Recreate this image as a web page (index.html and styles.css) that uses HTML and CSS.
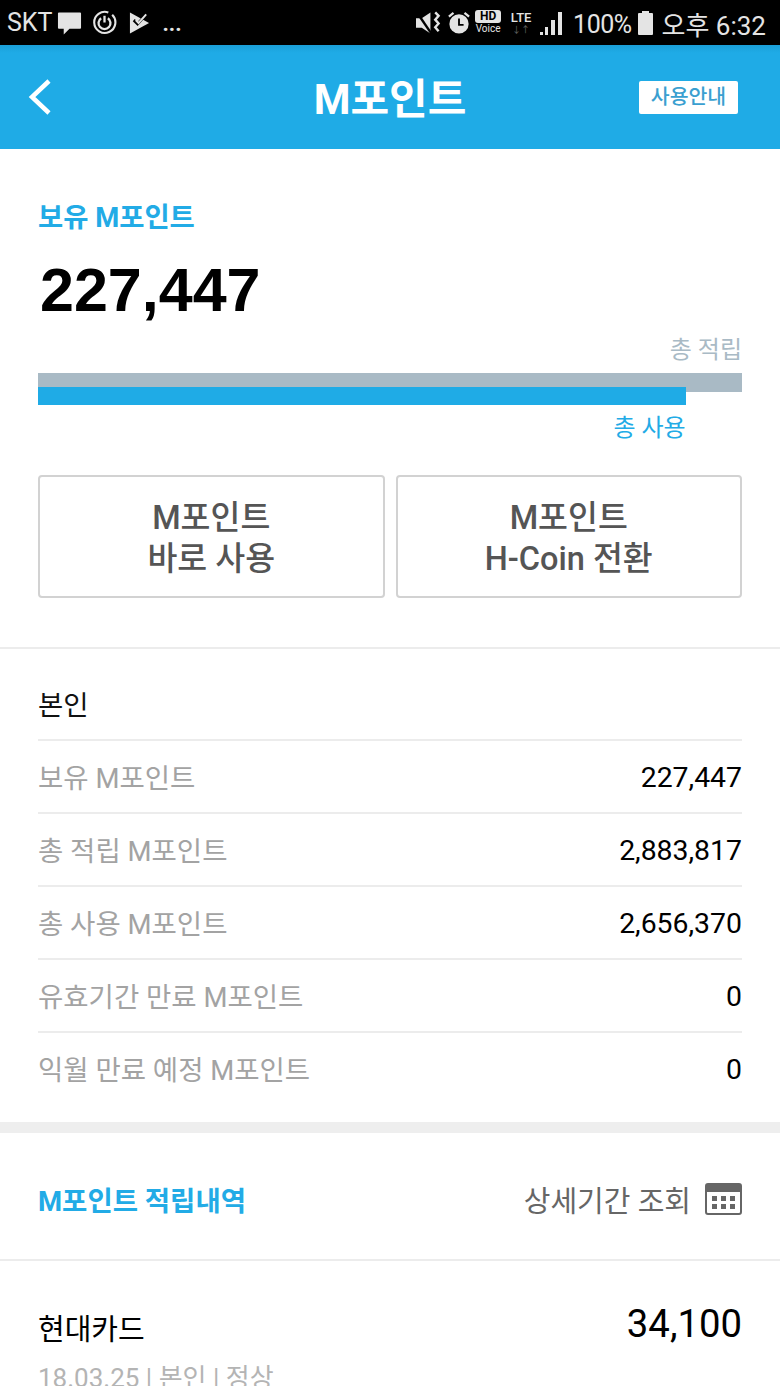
FILE: index.html
```html
<!DOCTYPE html>
<html lang="ko">
<head>
  <meta charset="UTF-8" />
  <meta name="viewport" content="width=device-width, initial-scale=1.0" />
  <title>M포인트</title>
  <link rel="stylesheet" href="styles.css">
</head>
<body>
  <div class="status-bar">
    <div class="status-left">
      <span class="carrier">SKT</span>
      <svg class="status-icon" width="25" height="24" viewBox="0 0 26 24"><path d="M2 1h22a1 1 0 0 1 1 1v15a1 1 0 0 1-1 1H13l-6 6v-6H2a1 1 0 0 1-1-1V2a1 1 0 0 1 1-1z" fill="#e4e4e4"/></svg>
      <svg class="status-icon" width="25" height="25" viewBox="0 0 26 26" fill="none" stroke="#e4e4e4"><path d="M21 5a11 11 0 1 1-4-2.500" stroke-width="2.200"/><path d="M9.500 8.500a6.200 6.200 0 1 0 7 0" stroke-width="2.400"/><path d="M13 6v7" stroke-width="2.400"/></svg>
      <svg class="status-icon" width="21" height="24" viewBox="0 0 22 24"><path d="M1 1l20 11L1 23z" fill="#e4e4e4"/><path d="M5 9l4 4 9-10" fill="none" stroke="#000" stroke-width="3"/><path d="M7 9l3 3 8-9" fill="none" stroke="#e4e4e4" stroke-width="2"/></svg>
      <span class="more">...</span>
    </div>
    <div class="status-right">
      <svg class="status-icon mute" width="25" height="26" viewBox="0 0 26 26"><path d="M0 8h6l9-6v22l-9-6H0z" fill="#e4e4e4"/><path d="M1 2l15 22" stroke="#000" stroke-width="2.500"/><path d="M20 2l3.500 3.500-3.500 4 3.500 4-3.500 4 3.500 4" fill="none" stroke="#e4e4e4" stroke-width="2.500"/></svg>
      <svg class="status-icon alarm" width="22" height="26" viewBox="0 0 24 26"><circle cx="12" cy="14" r="10.500" fill="#e4e4e4"/><path d="M12 8v7h5" fill="none" stroke="#000" stroke-width="2"/><path d="M1 6l5-4M23 6l-5-4" stroke="#e4e4e4" stroke-width="2.500"/></svg>
      <div class="hd-voice"><span class="hd">HD</span><span class="voice">Voice</span></div>
      <div class="lte"><span class="lte-text">LTE</span><span class="lte-arrows">↓↑</span></div>
      <svg class="status-icon signal" width="24" height="24" viewBox="0 0 22 24" fill="#e4e4e4"><path d="M0 21h3v3H0zM5 16h3v8H5zM11 9h4v15h-4zM18 1h4v23h-4z"/></svg>
      <span class="battery-text">100%</span>
      <svg class="status-icon battery" width="15" height="24" viewBox="0 0 15 24"><path d="M4 0h7v2h3a1 1 0 0 1 1 1v20a1 1 0 0 1-1 1H1a1 1 0 0 1-1-1V3a1 1 0 0 1 1-1h3z" fill="#e4e4e4"/></svg>
      <span class="clock">오후 6:32</span>
    </div>
  </div>

  <header class="app-header">
    <svg class="back" width="26" height="38" viewBox="0 0 26 38"><path d="M22 3L5 19l17 16" fill="none" stroke="#fff" stroke-width="4.500"/></svg>
    <div class="app-title">M포인트</div>
    <div class="guide-btn">사용안내</div>
  </header>

  <section class="summary">
    <div class="summary-label">보유 M포인트</div>
    <div class="summary-value">227,447</div>
    <div class="total-earn">총 적립</div>
    <div class="gauge">
      <div class="gauge-earn"></div>
      <div class="gauge-use" style="width: 92%"></div>
      <div class="total-use" style="width: 92%">총 사용</div>
    </div>
    <div class="action-row">
      <div class="action-btn">M포인트<br>바로 사용</div>
      <div class="action-btn">M포인트<br>H-Coin 전환</div>
    </div>
  </section>

  <section class="owner">
    <div class="owner-title">본인</div>
    <div class="point-row"><span class="point-name">보유 M포인트</span><span class="point-value">227,447</span></div>
    <div class="point-row"><span class="point-name">총 적립 M포인트</span><span class="point-value">2,883,817</span></div>
    <div class="point-row"><span class="point-name">총 사용 M포인트</span><span class="point-value">2,656,370</span></div>
    <div class="point-row"><span class="point-name">유효기간 만료 M포인트</span><span class="point-value">0</span></div>
    <div class="point-row"><span class="point-name">익월 만료 예정 M포인트</span><span class="point-value">0</span></div>
  </section>

  <section class="history">
    <div class="history-head">
      <div class="history-title">M포인트 적립내역</div>
      <div class="period">
        <span>상세기간 조회</span>
        <svg width="37" height="32" viewBox="0 0 37 32"><rect x="1" y="1" width="35" height="30" rx="2" fill="#fff" stroke="#666" stroke-width="2"/><path d="M1 3a2 2 0 0 1 2-2h31a2 2 0 0 1 2 2v6H1z" fill="#666"/><path d="M7 13h5v5H7zM16 13h5v5h-5zM25 13h5v5h-5zM7 21h5v5H7zM16 21h5v5h-5zM25 21h5v5h-5z" fill="#666"/></svg>
      </div>
    </div>
    <div class="history-item">
      <div class="item-top"><span class="item-name">현대카드</span><span class="item-amount">34,100</span></div>
      <div class="item-meta">18.03.25 | 본인 | 정상</div>
    </div>
  </section>
</body>
</html>
```

FILE: styles.css
```css
* {
  box-sizing: border-box;
}
html, body {
  height: 1386px;
  overflow: hidden;
}
body {
  margin: 0;
  background-color: #fff;
  font-family: Roboto, "Noto Sans CJK KR", sans-serif;
  color: #000;
}
.status-bar {
  height: 45px;
  background-color: #000;
  color: #e4e4e4;
  display: flex;
  justify-content: space-between;
  align-items: center;
  padding: 0 14px 0 7px;
}
.status-left, .status-right {
  display: flex;
  align-items: center;
}
.status-icon {
  display: block;
  flex: none;
}
.carrier {
  font-size: 25px;
  margin-right: 5px;
}
.status-left .status-icon {
  margin-right: 10px;
}
.status-left .status-icon:nth-child(3) {
  margin-right: 12px;
}
.more {
  font-size: 22px;
  font-weight: 700;
  margin: 2px 0 0 2px;
  line-height: 24px;
}
.mute {
  margin-right: 7px;
}
.alarm {
  margin-right: 5px;
}
.hd-voice {
  width: 26px;
  margin-right: 8px;
  display: flex;
  flex-direction: column;
  align-items: center;
}
.hd {
  width: 26px;
  height: 13px;
  background-color: #e4e4e4;
  color: #000;
  border-radius: 3px;
  font-size: 12px;
  font-weight: 700;
  line-height: 13px;
  text-align: center;
}
.voice {
  font-size: 10px;
  line-height: 12px;
}
.lte {
  width: 24px;
  margin-right: 6px;
  display: flex;
  flex-direction: column;
  align-items: center;
}
.lte-text {
  font-size: 13px;
  font-weight: 500;
  line-height: 14px;
}
.lte-arrows {
  font-size: 9px;
  line-height: 10px;
  color: #666;
}
.signal {
  margin-right: 10px;
}
.battery-text {
  font-size: 25px;
  letter-spacing: -0.5px;
  margin: 3px 6px 0 0;
}
.battery {
  margin-right: 9px;
}
.clock {
  font-size: 26px;
  margin-top: 2px;
}
.app-header {
  height: 104px;
  background: linear-gradient(#1b9fd8, #1fabe6 8px);
  display: flex;
  align-items: center;
  justify-content: space-between;
  padding: 0 42px 0 27px;
  position: relative;
}
.back {
  display: block;
}
.app-title {
  position: absolute;
  left: 0;
  right: 0;
  text-align: center;
  font-size: 42px;
  font-weight: 700;
  color: #fff;
  margin-top: -4px;
}
.guide-btn {
  width: 99px;
  height: 33px;
  background-color: #fff;
  border-radius: 2px;
  color: #3a9fd0;
  font-size: 20.5px;
  font-weight: 500;
  line-height: 32px;
  text-align: center;
  position: relative;
}
.summary {
  padding: 50px 38px 49px;
  border-bottom: 2px solid #ececec;
}
.summary-label {
  font-size: 27.4px;
  font-weight: 700;
  line-height: 38px;
  color: #22abe6;
}
.summary-value {
  font-family: "Liberation Sans", sans-serif;
  font-size: 61px;
  font-weight: 700;
  line-height: 66px;
  margin-top: 20px;
  padding-left: 2px;
  white-space: nowrap;
}
.total-earn {
  font-size: 24px;
  line-height: 34px;
  text-align: right;
  color: #a9bac5;
  margin-top: 10px;
}
.gauge {
  margin-top: 6px;
}
.gauge-earn {
  height: 19px;
  background-color: #a9bac5;
}
.gauge-use {
  height: 18px;
  margin-top: -5px;
  background-color: #1fabe6;
  position: relative;
}
.total-use {
  font-size: 24px;
  line-height: 34px;
  text-align: right;
  color: #22abe6;
  margin-top: 6px;
}
.action-row {
  display: flex;
  gap: 11px;
  margin-top: 30px;
}
.action-btn {
  flex: 1;
  height: 123px;
  padding-top: 5px;
  border: 2px solid #d2d2d2;
  border-radius: 4px;
  display: flex;
  align-items: center;
  justify-content: center;
  text-align: center;
  font-size: 32.5px;
  font-weight: 500;
  line-height: 41px;
  color: #555;
}
.owner {
  padding: 0 38px 18px;
  border-bottom: 11px solid #eee;
}
.owner-title {
  height: 90px;
  padding-top: 37px;
  font-size: 27.5px;
  line-height: 40px;
  color: #111;
}
.point-row {
  height: 73px;
  border-top: 2px solid #ececec;
  display: flex;
  justify-content: space-between;
  align-items: center;
}
.point-name {
  font-size: 27.5px;
  color: #a3a3a3;
  margin-top: -2px;
}
.point-value {
  font-size: 28.4px;
  color: #000;
  margin-top: 2px;
}
.history-head {
  height: 128px;
  padding: 6px 38px 0;
  border-bottom: 2px solid #ececec;
  display: flex;
  justify-content: space-between;
  align-items: center;
}
.history-title {
  font-size: 27.5px;
  font-weight: 700;
  color: #22abe6;
}
.period {
  display: flex;
  align-items: center;
  gap: 14px;
  font-size: 29px;
  color: #666;
}
.period svg {
  display: block;
}
.history-item {
  padding: 0 38px;
}
.item-top {
  display: flex;
  justify-content: space-between;
  align-items: center;
  height: 72px;
  margin-top: 27px;
}
.item-name {
  font-size: 29px;
  margin-top: 6px;
}
.item-amount {
  font-size: 38.3px;
  margin-top: -2px;
}
.item-meta {
  font-size: 26px;
  color: #b4b4b4;
  line-height: 36px;
  margin-top: 0;
}
```
